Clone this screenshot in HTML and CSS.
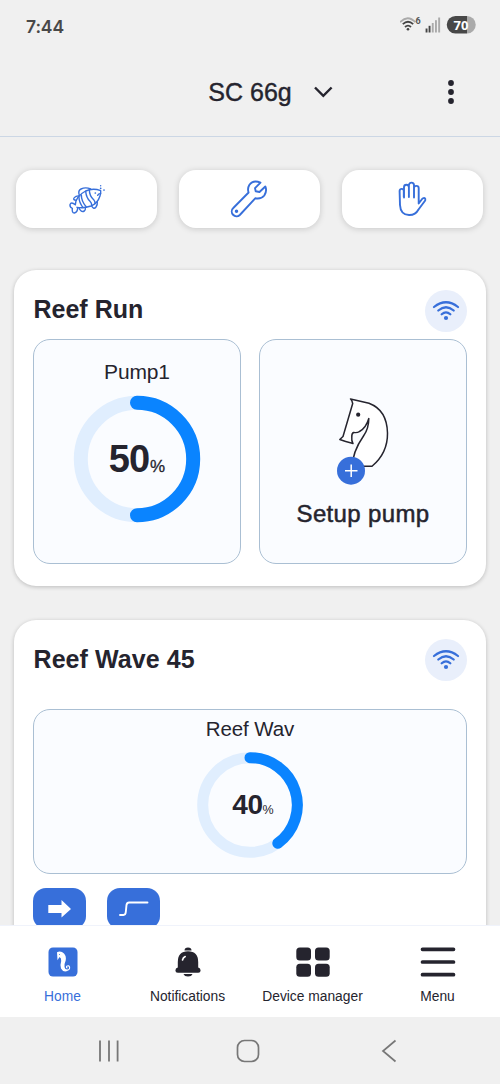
FILE: index.html
```html
<!DOCTYPE html>
<html lang="en">
<head>
<meta charset="utf-8">
<title>SC 66g</title>
<link rel="stylesheet" href="styles.css">
</head>
<body>
<div class="app">
  <div class="status">
    <span class="clock">7:44</span>
    <svg class="status-icons" width="80" height="20" viewBox="0 0 80 20">
      <g fill="none" stroke-width="1.8">
        <path d="M1.3 7.2Q9 -.7 16.700 7.2" transform="translate(-1.300 0)" stroke="#aaa"/>
        <path d="M2.800 9.100Q8 4.500 13.200 9.100M5 12Q8 9.300 11 12" stroke="#444"/>
      </g>
      <circle cx="8" cy="14.200" r="1.300" fill="#444"/>
      <text class="status-six" x="15.500" y="9">6</text>
      <g fill="#444"><rect x="25.600" y="13.500" width="1.900" height="4"/><rect x="28.600" y="10.800" width="1.900" height="6.700"/></g>
      <g fill="#aaa"><rect x="31.800" y="8" width="1.900" height="9.500"/><rect x="35" y="5.200" width="1.900" height="12.300"/><rect x="38.200" y="2.500" width="1.900" height="15"/></g>
      <path d="M55.500 1H67V18.500H55.500A8.700 8.700 0 0 1 55.500 1Z" fill="#484848"/>
      <path d="M67 1a8.750 8.750 0 0 1 0 17.500Z" fill="#aaa"/>
      <text class="battery-text" x="61" y="14.600">70</text>
    </svg>
  </div>
  <header class="header">
    <div class="title"><span>SC 66g</span>
      <svg width="20" height="14" viewBox="0 0 20 14"><path d="M2 2.500L10.300 10.900L18.600 2.500" fill="none" stroke="#25242e" stroke-width="2.400"/></svg>
    </div>
    <svg class="more" width="8" height="26" viewBox="0 0 8 26" fill="#25242e"><circle cx="4" cy="4" r="2.900"/><circle cx="4" cy="13" r="2.900"/><circle cx="4" cy="22" r="2.900"/></svg>
  </header>

  <main class="content">
    <div class="actions">
      <div class="action">
        <svg width="44" height="38" viewBox="0 0 132 114" fill="none" stroke="#376fda" stroke-width="4.200" stroke-linecap="round" stroke-linejoin="round">
          <path d="M31 74C32 58 45 42 62 33Q84 23 107 32Q108 40 105 48Q98 70 78 78Q56 86 36 82"/>
          <path d="M31 74Q18 64 15 74Q14 82 22 85Q20 98 28 99Q38 96 38 83"/>
          <path d="M43 46Q38 32 48 27Q62 20 77 27M34 61Q22 60 28 53Q34 46 44 48M42 84Q48 98 58 93Q62 90 61 83M80 78Q86 90 93 81Q98 74 97 65"/>
          <path d="M42 52Q42 67 54 83M49 45Q49 64 64 81M62 34Q64 53 75 64Q80 69 80 76M73 29Q73 47 86 59Q91 65 90 71"/>
          <path d="M98 46Q101 40 107 41"/>
          <g fill="#376fda" stroke="none"><circle cx="91" cy="39" r="2.600"/><circle cx="107" cy="25" r="2.600"/><circle cx="117" cy="30" r="2.600"/><circle cx="107" cy="17" r="2.200"/></g>
        </svg>
      </div>
      <div class="action">
        <svg width="40" height="40" viewBox="0 0 40 40" fill="none" stroke="#376fda" stroke-width="1.900" stroke-linejoin="round">
          <path d="M30.500 3.600Q23 .5 19.300 6Q17.200 9.500 18.600 13.500L3.300 29A4.700 4.700 0 0 0 9.800 36L25.200 19.300Q31 20.500 34.300 16.500Q37.300 12 35.300 7.500L29.500 13L25.700 12.300L25 9.100Z"/><circle cx="6.500" cy="32.300" r=".8" fill="#376fda"/>
        </svg>
      </div>
      <div class="action">
        <svg width="30" height="38" viewBox="0 0 30 38" fill="none" stroke="#376fda" stroke-width="1.900" stroke-linecap="round" stroke-linejoin="round">
          <path d="M5.800 17V11A2.100 2.100 0 0 0 1.600 11L2 25Q2.500 34.800 11 35Q17.500 35.200 20.500 29.500L27.200 20.500Q28 17 24.500 18.500L20.700 23.500V8.200A2.350 2.350 0 0 0 16 8.200V17.500M6 17.500V7.200A2.400 2.400 0 0 1 10.900 7.200V17M10.900 7.500V5.200A2.500 2.500 0 0 1 16 5.200V9"/>
        </svg>
      </div>
    </div>

    <section class="card card-run">
      <div class="card-head"><h2>Reef Run</h2>
        <span class="wifi"><svg width="28" height="24" viewBox="0 0 28 24" fill="none" stroke="#376fda" stroke-width="2.200" stroke-linecap="round"><path d="M2 8Q14 -1.500 26 8M6.300 11.500Q14 5 21.700 11.500M9.700 15.300Q14 11.300 18.300 15.300"/><circle cx="14" cy="19" r="2.100" fill="#376fda" stroke="none"/></svg></span>
      </div>
      <div class="tiles">
        <div class="tile pump">
          <div class="device-name">Pump1</div>
          <div class="gauge">
            <svg width="128" height="128" viewBox="0 0 128 128" fill="none" stroke-width="14"><circle cx="64" cy="64" r="56.200" stroke="#e0eefe"/><path d="M64 7.800A56.200 56.200 0 0 1 64 120.200" stroke="#0a84ff" stroke-linecap="round"/></svg>
            <div class="value"><b>50</b><span>%</span></div>
          </div>
        </div>
        <div class="tile setup">
          <svg width="60" height="88" viewBox="0 0 60 88">
            <path d="M19 78Q19.300 62 30.500 46Q35.800 38.500 35.800 28.500Q33 38 26.500 41.500Q24.500 43 20.500 42.500Q18.500 43.500 18.800 47.500Q18.300 50.500 20 53.500Q12 51.500 6.800 49.500L10 46.500L19.700 13.500Q19 10 17.500 9L36 13.200Q54 20 54.500 43Q54.800 63 39 76.300H29" fill="#fff" stroke="#25242e" stroke-width="1.500" stroke-linejoin="round"/>
            <circle cx="25.200" cy="24.700" r="2.100" fill="#25242e"/>
            <circle cx="18" cy="80.700" r="14" fill="#376fda"/>
            <path d="M12 80.800H24.500M18.200 74.500V87" stroke="#fff" stroke-width="1.500"/>
          </svg>
          <div class="setup-label">Setup pump</div>
        </div>
      </div>
    </section>

    <section class="card card-wave">
      <div class="card-head"><h2>Reef Wave 45</h2>
        <span class="wifi"><svg width="28" height="24" viewBox="0 0 28 24" fill="none" stroke="#376fda" stroke-width="2.200" stroke-linecap="round"><path d="M2 8Q14 -1.500 26 8M6.300 11.500Q14 5 21.700 11.500M9.700 15.300Q14 11.300 18.300 15.300"/><circle cx="14" cy="19" r="2.100" fill="#376fda" stroke="none"/></svg></span>
      </div>
      <div class="tile wave">
        <div class="device-name">Reef Wav</div>
        <div class="gauge">
          <svg width="108" height="108" viewBox="0 0 108 108" fill="none" stroke-width="11"><circle cx="54" cy="54" r="47.300" stroke="#e0eefe"/><path d="M54 6.700A47.300 47.300 0 0 1 81.800 92.300" stroke="#0a84ff" stroke-linecap="round"/></svg>
          <div class="value small"><b>40</b><span>%</span></div>
        </div>
      </div>
      <div class="chips">
        <span class="chip"><svg width="24" height="20" viewBox="0 0 24 20" fill="#fff"><path d="M.3 6H13.500V1L23 10L13.500 18.500V14H.3Z"/></svg></span>
        <span class="chip"><svg width="30" height="18" viewBox="0 0 30 18" fill="none" stroke="#fff" stroke-width="1.900" stroke-linecap="round"><path d="M1 15H4.500Q6.500 15 6.800 12L7.500 5Q8 2.500 10 2.500H28.500"/></svg></span>
      </div>
    </section>
  </main>

  <nav class="tabs">
    <div class="tab active">
      <svg width="30" height="30" viewBox="0 0 30 30"><rect x=".5" y=".5" width="29" height="29" rx="4.500" fill="#376fda"/><path d="M9 5.200Q13 3.500 16 6.500Q18.500 9 17.700 13.500Q16.300 16.500 16.500 20Q17.200 23 19.500 22.500V24Q15 25.500 13 21.500Q11.900 18 13.200 14Q13.500 11 11.500 10L9.500 13.200Z" fill="#fff"/><path d="M18.500 23.300Q22 22.800 21.600 20.200Q20.800 18 18.700 19.300Q18 20.700 19.500 21" fill="none" stroke="#fff" stroke-width="1.100"/><circle cx="11.500" cy="7.500" r=".5" fill="#376fda"/></svg>
      <span>Home</span>
    </div>
    <div class="tab">
      <svg width="30" height="30" viewBox="0 0 30 30" fill="#25242e"><path d="M11.500 3.500Q11.500 .500 15 .5Q18.500 .500 18.500 3.500Z"/><path d="M4.800 15Q4.800 4.300 15 4.300Q25.200 4.300 25.200 15V20.500Q27.600 21.300 27.600 23.400Q27.600 25.800 25.200 25.800H4.800Q2.400 25.800 2.400 23.400Q2.400 21.300 4.800 20.500Z"/><path d="M10.500 27H19.500Q18.500 29.500 15 29.500Q11.500 29.500 10.500 27Z"/><path d="M9.500 13Q10 10.500 12.200 9.500" fill="none" stroke="#fff" stroke-width="1.600" stroke-linecap="round"/></svg>
      <span>Notifications</span>
    </div>
    <div class="tab">
      <svg width="34" height="30" viewBox="0 0 34 30" fill="#25242e"><rect x=".3" y=".5" width="14.700" height="13" rx="3.500"/><rect x="19" y=".5" width="14.700" height="13" rx="3.500"/><rect x=".3" y="16.700" width="14.700" height="13" rx="3.500"/><rect x="19" y="16.700" width="14.700" height="13" rx="3.500"/></svg>
      <span>Device manager</span>
    </div>
    <div class="tab">
      <svg width="36" height="30" viewBox="0 0 36 30" fill="none" stroke="#25242e" stroke-width="3.700" stroke-linecap="round"><path d="M2.500 2.300H33.500M2.500 15H33.500M2.500 27.700H33.500"/></svg>
      <span>Menu</span>
    </div>
  </nav>
  <div class="system-nav">
    <svg width="22" height="24" viewBox="0 0 22 24" stroke="#777" stroke-width="1.800"><path d="M2 1.500V22.500M11 1.500V22.500M19.600 1.500V22.500"/></svg>
    <svg class="sys-home" width="24" height="24" viewBox="0 0 24 24" fill="none" stroke="#777" stroke-width="1.700"><rect x="1.500" y="1.500" width="21" height="21" rx="7"/></svg>
    <svg width="16" height="24" viewBox="0 0 16 24" fill="none" stroke="#777" stroke-width="1.700"><path d="M14.500 1.500L2 12L14.500 22.500"/></svg>
  </div>
</div>
</body>
</html>
```
FILE: styles.css
```css
* { box-sizing: border-box; }
body { margin: 0; background: #f0f0f0; color: #25242e; font-family: "Liberation Sans", Arial, sans-serif; }
svg { display: block; flex-shrink: 0; }
.app { width: 500px; height: 1084px; display: flex; flex-direction: column; overflow: hidden; }
.status { height: 48px; flex-shrink: 0; display: flex; justify-content: space-between; padding: 14px 20px 0 26px; }
.clock { font: 600 17.5px/25px Inter, sans-serif; color: #484848; letter-spacing: -0.1px; }
.status-icons { margin-top: 1px; }
.status-six { font: bold 9px Roboto, sans-serif; fill: #555; }
.battery-text { font: bold 13px "Open Sans", sans-serif; fill: #fff; text-anchor: middle; }
.header { height: 89px; flex-shrink: 0; display: grid; grid-template-columns: 1fr auto 1fr; align-items: center; border-bottom: 1px solid #ccd7e5; }
.title { grid-column: 2; display: flex; align-items: center; gap: 21px; font-size: 25px; line-height: 30px; -webkit-text-stroke: 0.4px #25242e; padding-left: 41px; }
.more { justify-self: end; margin-right: 45px; }
.content { flex: 1; min-height: 0; overflow: hidden; padding: 33px 14px 0; }
.actions { display: grid; grid-template-columns: repeat(3, 1fr); gap: 22px; padding: 0 3px 0 2px; height: 58px; }
.action { display: flex; align-items: center; justify-content: center; background: #fff; border-radius: 17px; box-shadow: 0 1px 6px rgba(0, 0, 0, 0.17); }
.card { background: #fff; border-radius: 22px; padding: 0 19px; box-shadow: 0 1px 4px rgba(0, 0, 0, 0.22); }
.card-run { margin-top: 42px; height: 316px; }
.card-wave { margin-top: 34px; height: 420px; }
.card-head { display: flex; justify-content: space-between; align-items: flex-start; height: 69px; padding-top: 20px; }
.card-wave .card-head { height: 89px; }
.card-head h2 { margin: 5px 0 0 0.5px; font-size: 25px; line-height: 29px; }
.card-wave h2 { letter-spacing: 0.08px; }
.wifi { width: 42px; height: 42px; border-radius: 50%; background: #e9effb; display: flex; align-items: center; justify-content: center; }
.card-wave .wifi { margin-top: -1px; }
.tiles { display: grid; grid-template-columns: 1fr 1fr; gap: 18px; height: 225px; }
.tile { border: 1px solid #aabfd3; border-radius: 17px; background: #fafcff; display: flex; flex-direction: column; align-items: center; }
.device-name { font-size: 21px; line-height: 24px; }
.pump { padding-top: 20px; }
.pump .device-name { letter-spacing: -0.15px; }
.gauge { display: grid; place-items: center; }
.gauge > * { grid-area: 1 / 1; }
.pump .gauge { margin-top: 11px; }
.value { display: flex; align-items: baseline; }
.value b { font-size: 38px; line-height: 44px; letter-spacing: -1px; }
.value span { font-size: 17px; margin-left: 1px; -webkit-text-stroke: 0.3px #25242e; }
.value.small { padding-left: 6px; }
.value.small b { font-size: 28px; line-height: 32px; letter-spacing: -0.4px; }
.value.small span { font-size: 12.5px; -webkit-text-stroke: 0; margin-left: 0; }
.setup { padding-top: 50px; }
.setup > svg { overflow: visible; }
.setup-label { margin-top: 22px; font-size: 24px; line-height: 28px; letter-spacing: 0.35px; -webkit-text-stroke: 0.5px #25242e; }
.wave { height: 165px; padding-top: 7px; }
.wave .device-name { font-size: 20.5px; letter-spacing: -0.1px; }
.wave .gauge { margin-top: 10px; }
.chips { display: flex; gap: 21px; margin-top: 14px; }
.chip { width: 53px; height: 41px; border-radius: 13px; background: #376fda; display: flex; align-items: center; justify-content: center; }
.tabs { height: 92px; flex-shrink: 0; background: #fff; border-top: 1px solid #f0f3fb; display: grid; grid-template-columns: repeat(4, 1fr); padding-top: 21px; }
.tab { display: flex; flex-direction: column; align-items: center; gap: 11px; font-size: 13.8px; line-height: 17px; white-space: nowrap; }
.tab.active { color: #376fda; }
.system-nav { height: 67px; flex-shrink: 0; display: flex; align-items: center; justify-content: space-between; padding: 0 103px 0 98px; }
.sys-home { margin-right: 5px; }
```
